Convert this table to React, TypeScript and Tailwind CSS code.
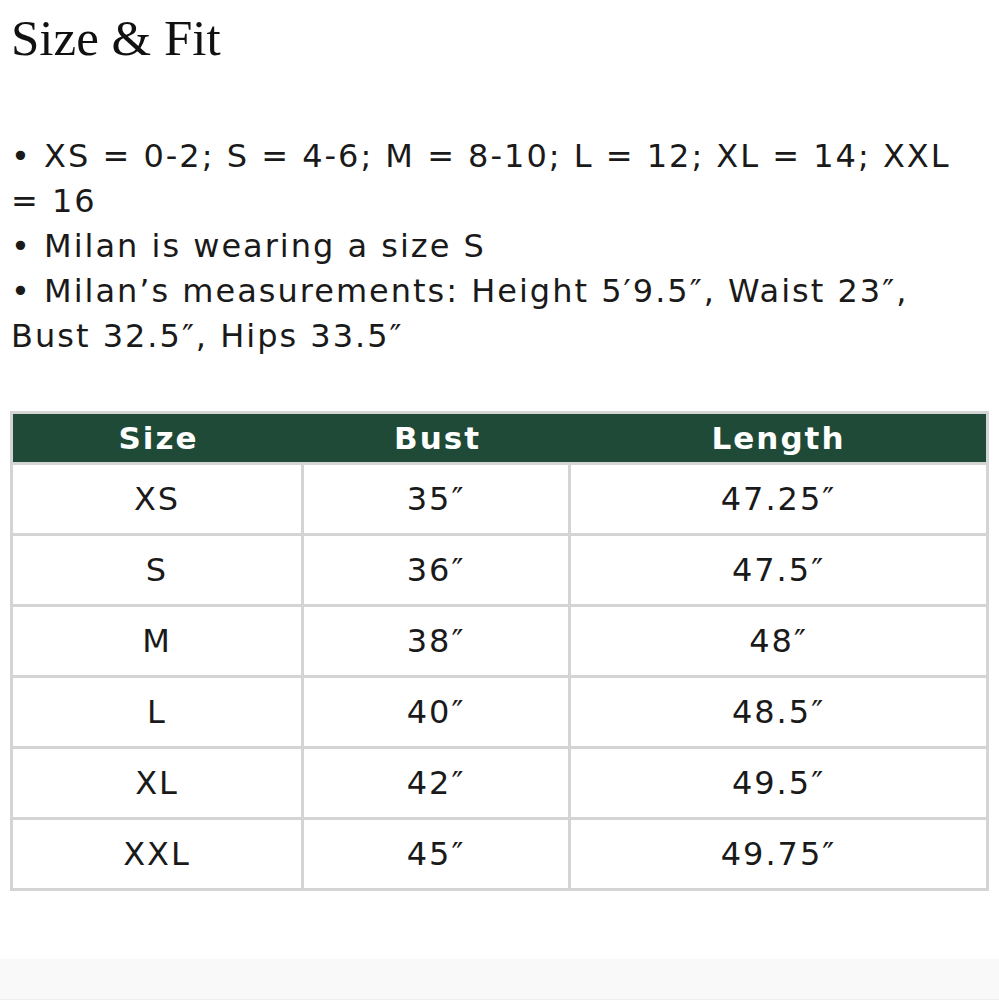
const rows = [
  ["XS", "35″", "47.25″"],
  ["S", "36″", "47.5″"],
  ["M", "38″", "48″"],
  ["L", "40″", "48.5″"],
  ["XL", "42″", "49.5″"],
  ["XXL", "45″", "49.75″"],
]

const bullets = [
  "XS = 0-2; S = 4-6; M = 8-10; L = 12; XL = 14; XXL = 16",
  "Milan is wearing a size S",
  "Milan’s measurements: Height 5′9.5″, Waist 23″, Bust 32.5″, Hips 33.5″",
]

export default function App() {
  return (
    <div className="min-h-[1000px] w-[999px] bg-white text-[#1a1a1a]">
      <div className="px-[11px]">
        <h1 className="mt-[13px] font-['Liberation_Serif',serif] text-[51px] leading-none text-[#111]">
          Size &amp; Fit
        </h1>

        <ul className="mt-[70px] w-[962px] font-['DejaVu_Sans',sans-serif] text-[32px] leading-[45px] tracking-[2px]">
          {bullets.map((b) => (
            <li key={b}>• {b}</li>
          ))}
        </ul>
      </div>

      <div className="mx-[10px] mt-[52px] w-[979px] border-[3px] border-[#d4d4d4] font-['DejaVu_Sans',sans-serif]">
        <div className="flex h-[48px] items-center bg-[#1f4a37] text-[31px] font-bold tracking-[2px] text-white">
          <div className="w-[291px] text-center">Size</div>
          <div className="w-[267px] text-center">Bust</div>
          <div className="flex-1 text-center">Length</div>
        </div>
        {rows.map((r) => (
          <div key={r[0]} className="flex h-[71px] border-t-[3px] border-[#d4d4d4] text-[32px] tracking-[2px]">
            <div className="flex w-[291px] items-center justify-center border-r-[3px] border-[#d4d4d4]">{r[0]}</div>
            <div className="flex w-[267px] items-center justify-center border-r-[3px] border-[#d4d4d4]">{r[1]}</div>
            <div className="flex flex-1 items-center justify-center">{r[2]}</div>
          </div>
        ))}
      </div>

      <div className="mt-[68px] h-[43px] border-b-[3px] border-[#eeeeee] bg-[#f9f9f9]" />
    </div>
  )
}
